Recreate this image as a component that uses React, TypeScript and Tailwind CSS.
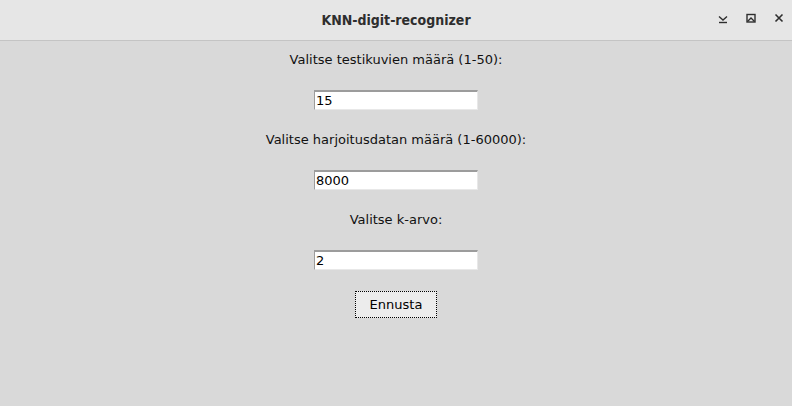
import React from 'react';

const FIELDS = [
  { label: 'Valitse testikuvien määrä (1-50):', value: '15' },
  { label: 'Valitse harjoitusdatan määrä (1-60000):', value: '8000' },
  { label: 'Valitse k-arvo:', value: '2' },
];

const App: React.FC = () => {
  return (
    <div className="w-[792px] h-[406px] flex flex-col bg-[#d9d9d9] overflow-hidden" style={{ fontFamily: '"DejaVu Sans", sans-serif' }}>
      {/* Title bar */}
      <div className="relative h-[41px] shrink-0 flex items-center justify-center bg-[#e6e6e6] border-b border-[#c4c4c4]">
        <span className="text-[14px] font-bold text-[#2e2e2e]" style={{ fontFamily: '"DejaVu Sans Condensed", "DejaVu Sans", sans-serif' }}>
          KNN-digit-recognizer
        </span>
        <div className="absolute right-[7px] top-[12px] flex items-center gap-[16px] text-[#2e2e2e]">
          <svg width="12" height="12" viewBox="0 0 12 12" fill="none" stroke="currentColor" strokeWidth="1.4">
            <path d="M2 4.5 L6 8 L10 4.5" />
            <path d="M2 10.5 H10" />
          </svg>
          <svg width="12" height="12" viewBox="0 0 12 12" fill="none" stroke="currentColor" strokeWidth="1.4">
            <rect x="2" y="2.5" width="8" height="7.5" />
            <path d="M2.5 9.5 L6 6 L9.5 9.5" />
          </svg>
          <svg width="12" height="12" viewBox="0 0 12 12" fill="none" stroke="currentColor" strokeWidth="1.6">
            <path d="M2.5 2.5 L9.5 9.5 M9.5 2.5 L2.5 9.5" />
          </svg>
        </div>
      </div>

      {/* Form */}
      <div className="flex flex-col items-center pt-[9px] gap-[20px] text-[13px] text-black">
        {FIELDS.map((f) => (
          <React.Fragment key={f.label}>
            <div className="h-[20px] leading-[20px] text-[#111]">{f.label}</div>
            <div className="w-[164px] h-[20px] bg-white border-t-2 border-l border-t-[#9c9c9c] border-l-[#9c9c9c] border-r border-b border-r-[#e8e8e8] border-b-[#e8e8e8] flex items-center pl-[1px] leading-none">
              {f.value}
            </div>
          </React.Fragment>
        ))}
        <button className="mt-[1px] w-[82px] h-[27px] bg-[#ececec] border border-dotted border-black outline outline-1 outline-[#d9d9d9] text-[13px] text-black">
          Ennusta
        </button>
      </div>
    </div>
  );
};

export default App;
